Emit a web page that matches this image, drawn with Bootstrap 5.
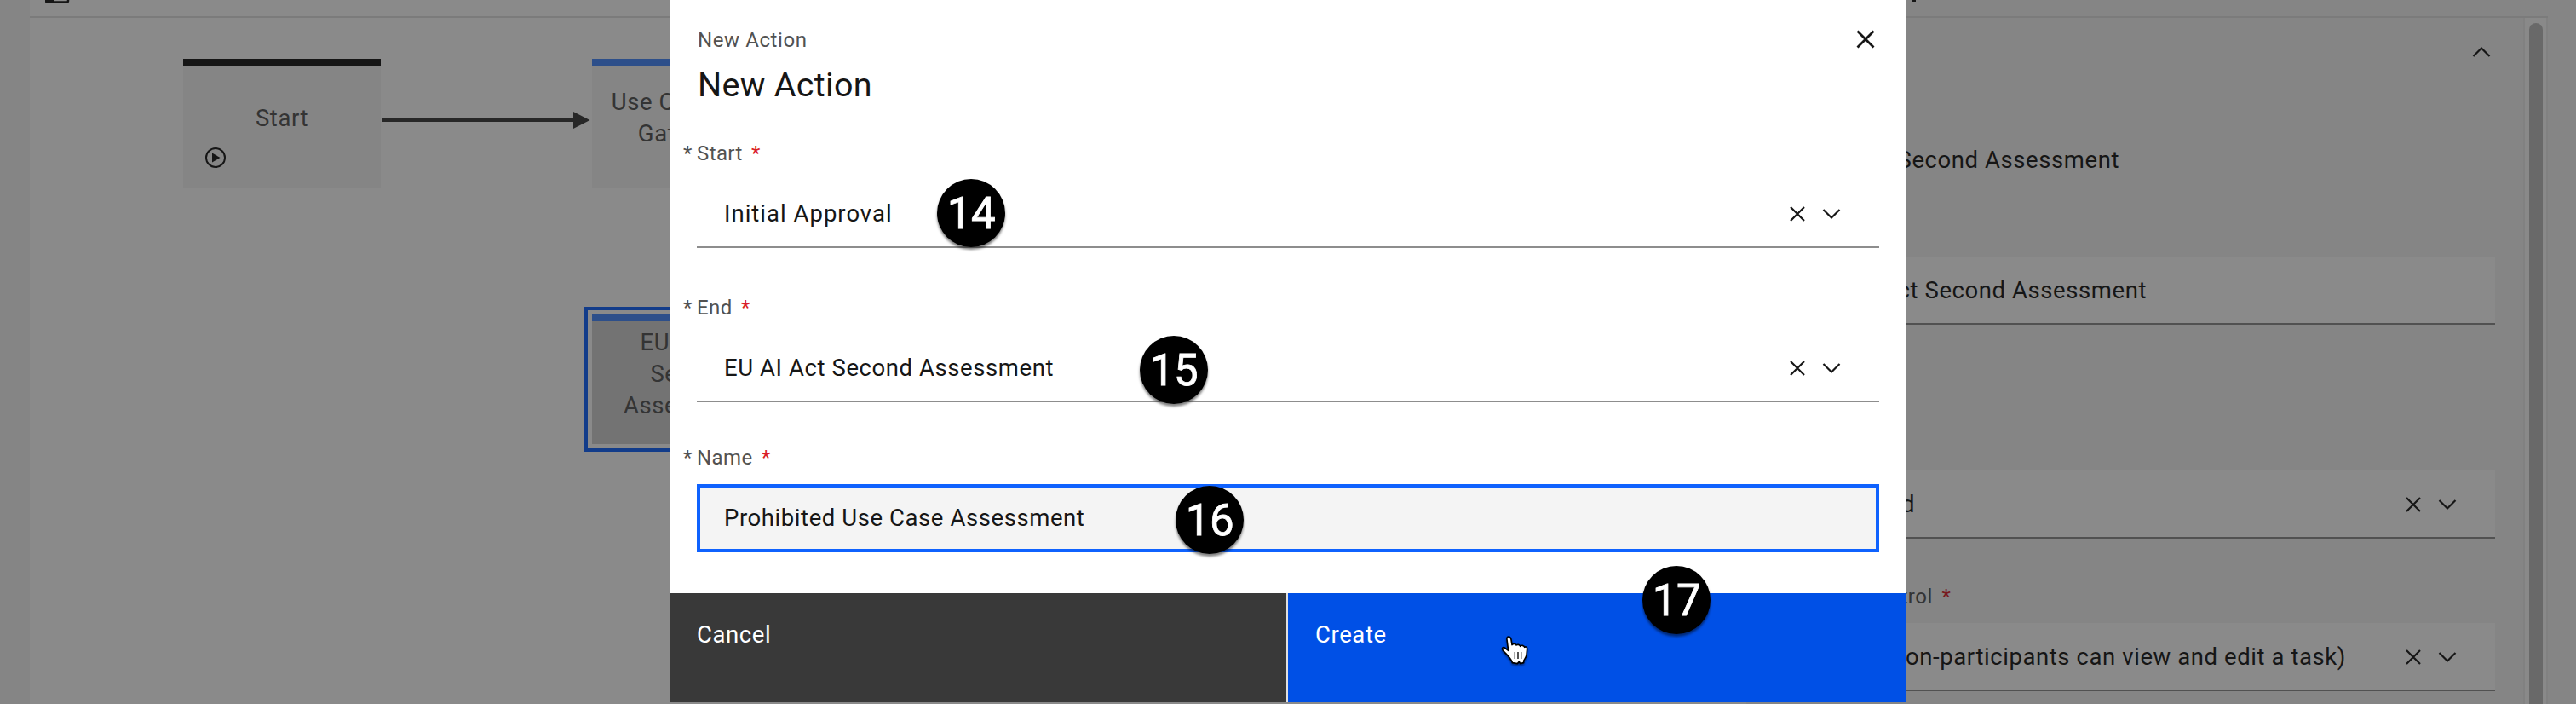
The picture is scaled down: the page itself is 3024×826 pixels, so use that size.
<!DOCTYPE html>
<html lang="en">
<head>
<meta charset="utf-8">
<title>New Action</title>
<link href="https://cdn.jsdelivr.net/npm/bootstrap@5.3.0/dist/css/bootstrap.min.css" rel="stylesheet">
<style>
body{font-family:Roboto,"Open Sans",sans-serif;font-size:27.5px;line-height:36px;letter-spacing:.58px;color:#161616;background:#f4f4f4;height:826px;overflow:hidden}
.stage{height:826px}
.rail{width:35px;background:#f4f4f4}
.topbar{height:21px;border-bottom:2px solid #e0e0e0;width:2956px}
.topbar-left{width:2015px}
.flow-canvas{width:2015px;height:805px;background:#fff}
.node{width:232px;height:152px;background:#f4f4f4;border-top:8px solid #4589ff;color:#525252;line-height:37px;text-align:center}
.node-start{left:180px;top:48px;padding-top:43px;border-top-color:#161616}
.node-data{left:660px;top:48px;padding-top:24px}
.node-sel{left:660px;top:348px;padding-top:6px;background:#d1d1d1;outline:4px solid #0f62fe;outline-offset:5px}
.flow-line{left:414px;top:110px}
.play{left:26px;top:96px}
.side{width:941px;height:805px;background:#f4f4f4;padding-left:51px}
.side-inner{width:828px}
.side-head{height:148px;padding:33px 5px 0 0}
.side-title{height:132px;padding-top:1px}
.side-gap{height:171px}
.side-lbl{height:99px;padding-top:52px}
.track{width:29px;height:805px;background:#fdfdfd;border:2px solid #ececec;border-width:0 2px;margin-left:33px;padding:6px 5px 0}
.thumb{width:16px;height:820px;border-radius:8px;background:#bcbcbc}
.field-box{height:80px;background:#fff;border-bottom:2px solid #8d8d8d;padding:1px 45px 0 32px}
.txt-state{width:115px;text-align:right}
.txt-access{width:168px;text-align:right;display:inline-block}
.txt-open{width:620px;text-align:right;white-space:nowrap}
.icons{gap:20px}
.lbl{font-size:24px;line-height:32px;color:#525252;white-space:nowrap}
.req{color:#da1e28;margin-left:4px}
.star{display:inline-block;width:16px;margin-left:-16px}
.shade{inset:0;background:rgba(22,22,22,.5)}
.dialog-box{left:786px;top:0;width:1452px;height:824px;background:#fff}
.dialog-head{padding:31px 37px 0 33px;height:162px}
.dialog-body{padding:0 32px;height:534px}
.dialog-body .lbl{letter-spacing:.4px}
.lbl-start{height:49px;padding-top:2px}
.lbl-end{height:101px;padding-top:54px}
.lbl-name{height:96px;padding-top:49px}
.ttl{font-size:39.5px;line-height:52px;letter-spacing:.3px;margin:11px 0 0;font-weight:400}
.wide{letter-spacing:1px}
.name-in{height:80px;border:4px solid #0f62fe;background:#f4f4f4;padding:0 28px}
.foot-btn{width:726px;height:128px;border:0;background:#0050e6;color:#fff;padding:31px 32px 0;letter-spacing:.6px}
.foot-btn.cancel{width:724px;background:#393939;margin-right:2px}
.dialog-foot{background:#e0e0e0}
.step{width:80px;height:80px;border-radius:50%;background:#000;color:#fff;font:400 51px/82px Roboto,sans-serif;-webkit-text-stroke:.8px #fff;letter-spacing:-.5px;text-align:center;box-shadow:0 3px 3px rgba(0,0,0,.5)}
.pointer{left:1762px;top:745px;filter:drop-shadow(0 2px 1px rgba(0,0,0,.4))}
.ic{fill:none;stroke:#161616;stroke-width:2.2}
.close-ic{margin-top:4px;stroke-width:2.8}
</style>
</head>
<body>
<svg class="d-none">
  <symbol id="x" viewBox="0 0 18 18"><path d="M1 1L17 17M17 1L1 17"/></symbol>
  <symbol id="down" viewBox="0 0 22 14"><path d="M1.500 2L11 11.500L20.500 2"/></symbol>
</svg>
<div class="stage position-relative overflow-hidden d-flex">
  <div class="rail flex-shrink-0"></div>
  <div class="flex-shrink-0">
    <div class="topbar d-flex">
      <div class="topbar-left bg-white"><svg class="d-block" style="margin-left:18px" width="30" height="6"><path d="M1 -14V1Q1 2.500 2.500 2.500H25Q27 2.500 27 1V-14" fill="none" stroke="#161616" stroke-width="2.500"/><path d="M1 -14H10V3H1z" fill="#161616"/></svg></div>
      <div class="flex-grow-1"><svg class="d-block" style="margin-left:195px" width="6" height="3"><path d="M0 0h4v2h-4z" fill="#161616"/></svg></div>
    </div>
    <div class="d-flex">
      <div class="flow-canvas position-relative">
        <div class="node node-start position-absolute">Start
          <svg class="play position-absolute" width="24" height="24" viewBox="0 0 24 24"><circle cx="12" cy="12" r="11" fill="none" stroke="#161616" stroke-width="2"/><path d="M8 6.500V17.500L17.500 12z" fill="#161616"/></svg>
        </div>
        <svg class="flow-line position-absolute" width="244" height="20"><path d="M0 10H226" stroke="#393939" stroke-width="4"/><path d="M224 0L243.500 10L224 20z" fill="#393939"/></svg>
        <div class="node node-data position-absolute">Use Case Data<br>Gathering</div>
        <div class="node node-sel position-absolute">EU AI Act<br>Second<br>Assessment</div>
      </div>
      <div class="side d-flex">
        <div class="side-inner flex-shrink-0">
          <div class="side-head d-flex justify-content-end"><svg class="ic" width="22" height="14"><path d="M1.500 12L11 2.500L20.500 12"/></svg></div>
          <div class="side-title">EU AI Act Second Assessment</div>
          <div class="field-box d-flex align-items-center">EU AI Act Second Assessment</div>
          <div class="side-gap"></div>
          <div class="field-box d-flex align-items-center justify-content-between"><span class="txt-state">Required</span><span class="icons d-flex align-items-center"><svg class="ic" width="18" height="18"><use href="#x"/></svg><svg class="ic" width="22" height="14"><use href="#down"/></svg></span></div>
          <div class="lbl side-lbl"><span class="txt-access">Access control</span> <span class="req">*</span></div>
          <div class="field-box d-flex align-items-center justify-content-between"><span class="txt-open">Open (Non-participants can view and edit a task)</span><span class="icons d-flex align-items-center"><svg class="ic" width="18" height="18"><use href="#x"/></svg><svg class="ic" width="22" height="14"><use href="#down"/></svg></span></div>
        </div>
        <div class="track flex-shrink-0"><div class="thumb"></div></div>
      </div>
    </div>
  </div>
</div>
<div class="shade position-absolute"></div>
<div class="dialog-box position-absolute">
  <div class="dialog-head d-flex justify-content-between">
    <div><div class="lbl">New Action</div><h1 class="ttl">New Action</h1></div>
    <svg class="ic close-ic" width="22" height="22"><path d="M1.500 1.500L20.500 20.500M20.500 1.500L1.500 20.500"/></svg>
  </div>
  <div class="dialog-body">
    <div class="lbl lbl-start"><span class="star">*</span>Start <span class="req">*</span></div>
    <div class="field-box d-flex align-items-center justify-content-between"><span class="wide">Initial Approval</span><span class="icons d-flex align-items-center"><svg class="ic" width="18" height="18"><use href="#x"/></svg><svg class="ic" width="22" height="14"><use href="#down"/></svg></span></div>
    <div class="lbl lbl-end"><span class="star">*</span>End <span class="req">*</span></div>
    <div class="field-box d-flex align-items-center justify-content-between"><span>EU AI Act Second Assessment</span><span class="icons d-flex align-items-center"><svg class="ic" width="18" height="18"><use href="#x"/></svg><svg class="ic" width="22" height="14"><use href="#down"/></svg></span></div>
    <div class="lbl lbl-name"><span class="star">*</span>Name <span class="req">*</span></div>
    <div class="name-in d-flex align-items-center">Prohibited Use Case Assessment</div>
  </div>
  <div class="dialog-foot d-flex"><div role="button" class="foot-btn cancel">Cancel</div><div role="button" class="foot-btn">Create</div></div>
</div>
<div class="step position-absolute" style="left:1100px;top:210px">14</div>
<div class="step position-absolute" style="left:1338px;top:394px">15</div>
<div class="step position-absolute" style="left:1380px;top:570px">16</div>
<div class="step position-absolute" style="left:1928px;top:664px">17</div>
<svg class="pointer position-absolute" width="32" height="36" viewBox="66 45 96 108"><path d="M93 51C99 51 101 56 102 61L105 80C108 75 118 75 120 81C124 77 132 79 134 85C138 79 147 82 149 88C153 84 159 88 158 95L156 115C155 125 148 130 146 136L146 143L134 146L130 139L124 146L106 143C105 135 98 128 92 120C86 112 78 106 72 98C68 91 73 87 79 90L92 100L87 62C86 55 88 51 93 51Z" fill="#fff" stroke="#000" stroke-width="5" stroke-linejoin="round"/><path d="M115 105V129M126 105V129M137 105V129" stroke="#000" stroke-width="4"/></svg>
<script src="https://cdn.jsdelivr.net/npm/bootstrap@5.3.0/dist/js/bootstrap.bundle.min.js"></script>
</body>
</html>
